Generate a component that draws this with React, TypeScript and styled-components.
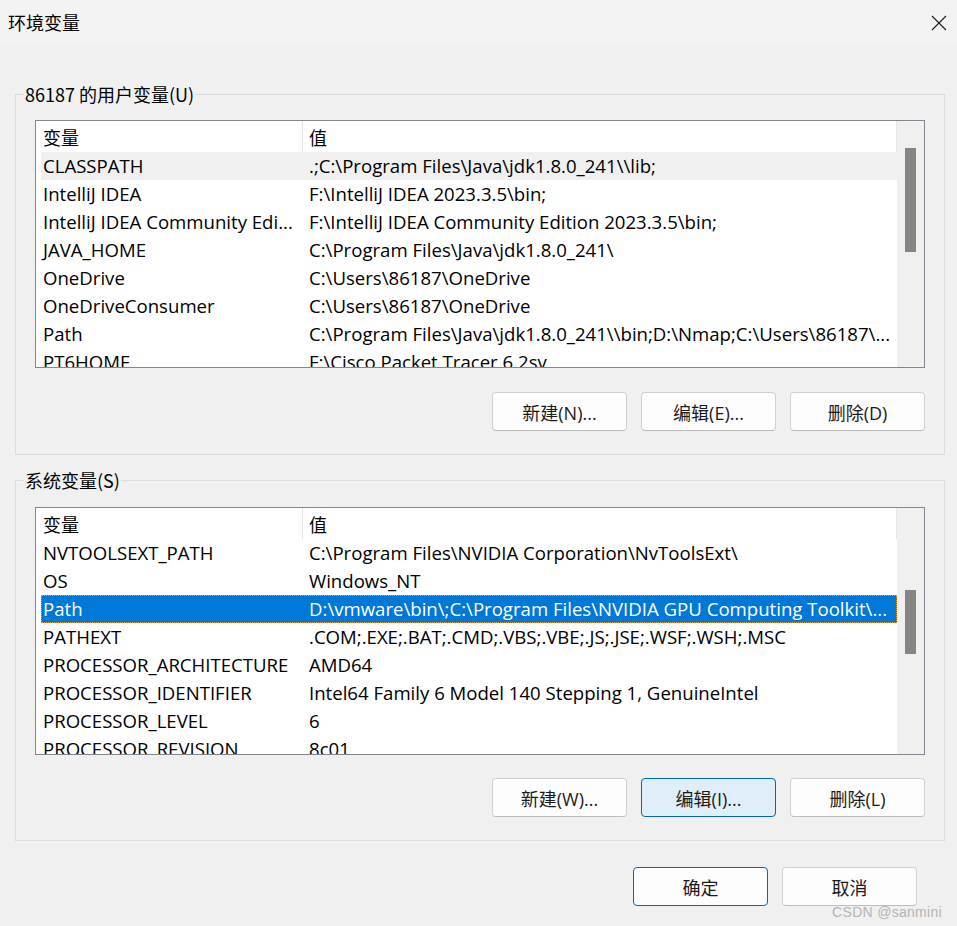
import React from 'react'
import styled, { createGlobalStyle } from 'styled-components'

interface EnvVar {
  name: string
  value: string
}

const userVars: EnvVar[] = [
  { name: 'CLASSPATH', value: '.;C:\\Program Files\\Java\\jdk1.8.0_241\\\\lib;' },
  { name: 'IntelliJ IDEA', value: 'F:\\IntelliJ IDEA 2023.3.5\\bin;' },
  { name: 'IntelliJ IDEA Community Edi...', value: 'F:\\IntelliJ IDEA Community Edition 2023.3.5\\bin;' },
  { name: 'JAVA_HOME', value: 'C:\\Program Files\\Java\\jdk1.8.0_241\\' },
  { name: 'OneDrive', value: 'C:\\Users\\86187\\OneDrive' },
  { name: 'OneDriveConsumer', value: 'C:\\Users\\86187\\OneDrive' },
  { name: 'Path', value: 'C:\\Program Files\\Java\\jdk1.8.0_241\\\\bin;D:\\Nmap;C:\\Users\\86187\\...' },
  { name: 'PT6HOME', value: 'F:\\Cisco Packet Tracer 6.2sv' },
]

const sysVars: EnvVar[] = [
  { name: 'NVTOOLSEXT_PATH', value: 'C:\\Program Files\\NVIDIA Corporation\\NvToolsExt\\' },
  { name: 'OS', value: 'Windows_NT' },
  { name: 'Path', value: 'D:\\vmware\\bin\\;C:\\Program Files\\NVIDIA GPU Computing Toolkit\\...' },
  { name: 'PATHEXT', value: '.COM;.EXE;.BAT;.CMD;.VBS;.VBE;.JS;.JSE;.WSF;.WSH;.MSC' },
  { name: 'PROCESSOR_ARCHITECTURE', value: 'AMD64' },
  { name: 'PROCESSOR_IDENTIFIER', value: 'Intel64 Family 6 Model 140 Stepping 1, GenuineIntel' },
  { name: 'PROCESSOR_LEVEL', value: '6' },
  { name: 'PROCESSOR_REVISION', value: '8c01' },
]

const GlobalStyle = createGlobalStyle`
  html, body {
    margin: 0;
    padding: 0;
    background: #f0f0f0;
  }
  body {
    font-family: "Segoe UI", "Open Sans", "Noto Sans CJK SC", sans-serif;
    color: #000;
  }
  * {
    box-sizing: border-box;
  }
`

interface VarListProps {
  vars: EnvVar[]
  hovered?: number
  selected?: number
  thumbTop: number
  thumbHeight: number
}

const VarList = ({ vars, hovered, selected, thumbTop, thumbHeight }: VarListProps) => (
  <ListView>
    <ListBody>
      <HeaderRow>
        <HeaderCell $divider>变量</HeaderCell>
        <HeaderCell>值</HeaderCell>
      </HeaderRow>
      {vars.map((v, i) => (
        <Row key={v.name + i} $hovered={hovered === i} $selected={selected === i}>
          <NameCell>{v.name}</NameCell>
          <ValueCell>{v.value}</ValueCell>
        </Row>
      ))}
    </ListBody>
    <ScrollTrack>
      <Thumb $top={thumbTop} $height={thumbHeight} />
    </ScrollTrack>
  </ListView>
)

const App = () => {
  return (
    <>
      <GlobalStyle />
      <Window>
        <TitleBar>
          <Title>环境变量</Title>
          <CloseButton aria-label="关闭">
            <svg width="16" height="16" viewBox="0 0 16 16">
              <path d="M1 1 L15 15 M15 1 L1 15" stroke="#1a1a1a" strokeWidth="1.1" fill="none" />
            </svg>
          </CloseButton>
        </TitleBar>
        <Content>
          <Group $padTop={16}>
            <Legend>86187 的用户变量(U)</Legend>
            <VarList vars={userVars} hovered={0} thumbTop={27} thumbHeight={104} />
            <ButtonRow $space={24}>
              <Button>新建(N)...</Button>
              <Button>编辑(E)...</Button>
              <Button>删除(D)</Button>
            </ButtonRow>
          </Group>
          <Group $padTop={17} $gap>
            <Legend>系统变量(S)</Legend>
            <VarList vars={sysVars} selected={2} thumbTop={82} thumbHeight={64} />
            <ButtonRow $space={23}>
              <Button>新建(W)...</Button>
              <Button $focused>编辑(I)...</Button>
              <Button>删除(L)</Button>
            </ButtonRow>
          </Group>
          <FooterRow $space={26}>
            <Button $default>确定</Button>
            <Button>取消</Button>
          </FooterRow>
        </Content>
        <Watermark>CSDN @sanmini</Watermark>
      </Window>
    </>
  )
}

const Window = styled.div`
  position: relative;
  width: 957px;
  height: 926px;
  background: #f0f0f0;
  display: flex;
  flex-direction: column;
  overflow: hidden;
`

const TitleBar = styled.div`
  height: 44px;
  flex: none;
  background: #f3f3f3;
  display: flex;
  align-items: center;
  justify-content: space-between;
  padding: 0 10px 0 8px;
`

const Title = styled.div`
  font-family: "Noto Sans CJK SC", sans-serif;
  font-size: 18px;
  line-height: 20px;
  color: #000;
`

const CloseButton = styled.div`
  width: 16px;
  height: 16px;
  display: flex;
  margin-top: 1px;
`

const Content = styled.div`
  display: flex;
  flex-direction: column;
  padding: 40px 12px 0 15px;
`

const Group = styled.fieldset<{ $gap?: boolean; $padTop: number }>`
  margin: ${(p) => (p.$gap ? '15px' : '0')} 0 0 0;
  min-width: 0;
  padding: ${(p) => p.$padTop}px 19px 23px 19px;
  border: 1px solid #dcdcdc;
  display: flex;
  flex-direction: column;
`

const Legend = styled.legend`
  margin-left: -11px;
  padding: 0 1px;
  font-family: "Noto Sans CJK SC", sans-serif;
  font-size: 18px;
  line-height: 20px;
  color: #000;
`

const ListView = styled.div`
  display: flex;
  height: 248px;
  border: 1px solid #828790;
  background: #fff;
  overflow: hidden;
`

const ListBody = styled.div`
  flex: 1;
  min-width: 0;
  display: flex;
  flex-direction: column;
  overflow: hidden;
`

const HeaderRow = styled.div`
  flex: none;
  display: grid;
  grid-template-columns: 262px 1fr;
  height: 31px;
  margin-left: 5px;
  border-right: 1px solid #e5e5e5;
`

const HeaderCell = styled.div<{ $divider?: boolean }>`
  display: flex;
  align-items: center;
  padding-left: ${(p) => (p.$divider ? '2px' : '6px')};
  border-right: ${(p) => (p.$divider ? '1px solid #e5e5e5' : 'none')};
  font-family: "Noto Sans CJK SC", sans-serif;
  font-size: 18px;
  padding-top: 1px;
`

const Row = styled.div<{ $hovered?: boolean; $selected?: boolean }>`
  flex: none;
  display: grid;
  grid-template-columns: 262px 1fr;
  height: 28px;
  margin-left: 5px;
  align-items: center;
  font-size: 18.6px;
  line-height: 24px;
  background: ${(p) => (p.$selected ? '#0078d7' : p.$hovered ? '#f0f0f0' : 'transparent')};
  color: ${(p) => (p.$selected ? '#fff' : '#000')};
  outline: ${(p) => (p.$selected ? '1px dotted #e8993a' : 'none')};
  outline-offset: -1px;
`

const NameCell = styled.div`
  padding-left: 2px;
  white-space: nowrap;
  overflow: hidden;
  text-overflow: ellipsis;
`

const ValueCell = styled.div`
  padding-left: 6px;
  white-space: nowrap;
  overflow: hidden;
  text-overflow: ellipsis;
`

const ScrollTrack = styled.div`
  flex: none;
  width: 27px;
  background: #f0f0f0;
  padding-left: 8px;
`

const Thumb = styled.div<{ $top: number; $height: number }>`
  width: 11px;
  margin-top: ${(p) => p.$top}px;
  height: ${(p) => p.$height}px;
  background: #858585;
`

const ButtonRow = styled.div<{ $space: number }>`
  display: flex;
  justify-content: flex-end;
  gap: 14px;
  margin-top: ${(p) => p.$space}px;
`

const FooterRow = styled(ButtonRow)`
  padding-right: 28px;
`

const Button = styled.button<{ $focused?: boolean; $default?: boolean }>`
  width: 135px;
  height: 39px;
  border-radius: 4px;
  border: 1px solid ${(p) => (p.$focused || p.$default ? '#0067c0' : '#d0d0d0')};
  border-bottom-color: ${(p) => (p.$focused || p.$default ? '#0067c0' : '#bcbcbc')};
  background: ${(p) => (p.$focused ? '#e0eef9' : '#fdfdfd')};
  font-family: "Segoe UI", "Open Sans", "Noto Sans CJK SC", sans-serif;
  font-size: 18px;
  color: #1a1a1a;
  padding: 0;
  display: flex;
  align-items: center;
  justify-content: center;
`

const Watermark = styled.div`
  position: absolute;
  right: 15px;
  bottom: 6px;
  font-family: "Liberation Sans", Arial, sans-serif;
  font-size: 14px;
  color: #b4b4b4;
  letter-spacing: 0.3px;
`

export default App
